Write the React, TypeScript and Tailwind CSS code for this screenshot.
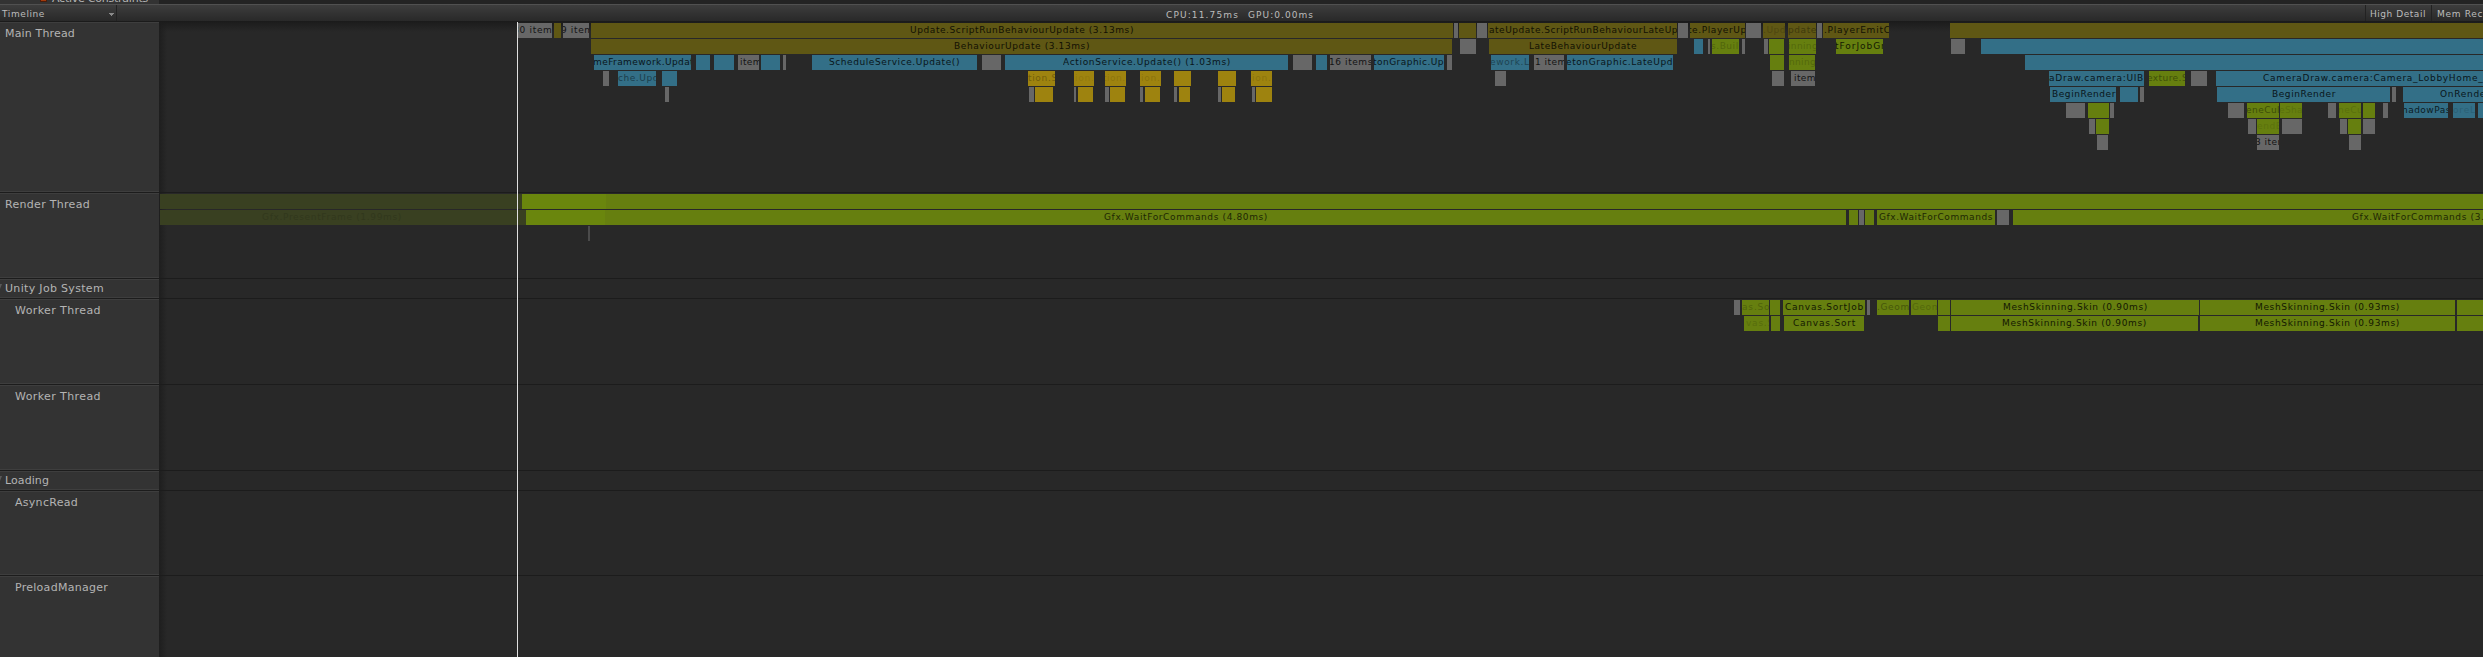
import React, { useLayoutEffect, useRef, useState } from 'react';

type Tone = 'o' | 'g' | 'b' | 'y' | 'x' | 'd' | 'l' | 'k';
const TONES: Record<Tone, string> = {
  o: 'bg-[#5f5714]',
  g: 'bg-[#667f0f]',
  l: 'bg-[#6a860d]',
  b: 'bg-[#336f87]',
  y: 'bg-[#9e830f]',
  x: 'bg-[#676767]',
  d: 'bg-[#394021]',
  k: 'bg-[#4b4b4b]',
};

// [start, end, tone, label, label start, label width, label opacity]
type Sample = [number, number, Tone, string?, number?, number?, number?];

function Fit({ text, width, className }: { text: string; width: number; className: string }) {
  const ref = useRef<HTMLSpanElement>(null);
  const [spacing, setSpacing] = useState(0);
  useLayoutEffect(() => {
    if (ref.current) {
      const natural = ref.current.getBoundingClientRect().width;
      setSpacing((width - natural) / text.length);
    }
  }, [text, width]);
  return (
    <span ref={ref} className={`block w-max whitespace-pre ${className}`} style={{ letterSpacing: spacing }}>
      {text}
    </span>
  );
}

function Bar({ s }: { s: Sample }) {
  const [a, b, tone, text, tx = 0, tw = 0, op = 0.8] = s;
  return (
    <div className={`absolute inset-y-0 overflow-hidden ${TONES[tone]}`} style={{ left: a - 159, width: b - a }}>
      {text && (
        <div className="absolute top-0 flex" style={{ left: tx - a, opacity: op }}>
          <Fit text={text} width={tw} className="text-[9px] leading-[14px] text-black" />
        </div>
      )}
    </div>
  );
}

function Track({ rows, height, group }: { rows: Sample[][]; height: number; group?: boolean }) {
  return (
    <div className="flex flex-col gap-px border-b border-[#1c1c1c] pt-px" style={{ height }}>
      {!group &&
        rows.map((row, i) => (
          <div key={i} className="relative h-[15px] shrink-0">
            {row.map((s, j) => (
              <Bar key={j} s={s} />
            ))}
          </div>
        ))}
    </div>
  );
}

const MAIN: Sample[][] = [
  [
    [518, 552, 'x', '80 items', 513, 45],
    [554, 561, 'o'],
    [563, 589, 'x', '9 items', 561, 38],
    [591, 1453, 'o', 'Update.ScriptRunBehaviourUpdate (3.13ms)', 910, 224],
    [1454, 1458, 'x'],
    [1459, 1476, 'o'],
    [1477, 1487, 'x'],
    [1488, 1677, 'o', 'ateUpdate.ScriptRunBehaviourLateUp', 1489, 189],
    [1678, 1688, 'x'],
    [1690, 1745, 'o', 'te.PlayerUpd', 1688, 65],
    [1746, 1761, 'x'],
    [1763, 1785, 'o', '.Upda', 1763, 29, 0.18],
    [1788, 1816, 'o', 'pdate', 1788, 29, 0.35],
    [1817, 1822, 'x'],
    [1823, 1889, 'o', '.PlayerEmitCa', 1824, 73],
    [1950, 2483, 'o'],
  ],
  [
    [591, 1452, 'o', 'BehaviourUpdate (3.13ms)', 954, 136],
    [1460, 1476, 'x'],
    [1489, 1677, 'o', 'LateBehaviourUpdate', 1529, 108],
    [1694, 1703, 'b'],
    [1708, 1710, 'x'],
    [1712, 1739, 'g', 's.Build', 1711, 34, 0.2],
    [1742, 1745, 'x'],
    [1764, 1768, 'x'],
    [1769, 1784, 'g'],
    [1789, 1816, 'g', 'inning', 1788, 30, 0.18],
    [1836, 1883, 'g', 'tForJobGro', 1835, 57],
    [1951, 1965, 'x'],
    [1981, 2483, 'b'],
  ],
  [
    [594, 691, 'b', 'meFramework.Update', 593, 107],
    [696, 710, 'b'],
    [714, 734, 'b'],
    [738, 759, 'x', 'items', 740, 27],
    [761, 780, 'b'],
    [783, 786, 'x'],
    [812, 977, 'b', 'ScheduleService.Update()', 829, 131],
    [982, 1001, 'x'],
    [1005, 1288, 'b', 'ActionService.Update() (1.03ms)', 1063, 168],
    [1293, 1312, 'x'],
    [1316, 1327, 'b'],
    [1330, 1371, 'x', '16 items', 1329, 44],
    [1374, 1444, 'b', 'tonGraphic.Up', 1373, 71],
    [1447, 1452, 'x'],
    [1491, 1529, 'b', 'ework.Lat', 1490, 50, 0.4],
    [1534, 1564, 'x', '1 items', 1535, 37],
    [1567, 1673, 'b', 'etonGraphic.LateUpd', 1566, 107],
    [1770, 1784, 'g'],
    [1789, 1815, 'g', 'nning', 1789, 27, 0.18],
    [2025, 2483, 'b'],
  ],
  [
    [603, 609, 'x'],
    [618, 656, 'b', 'che.Upda', 618, 47, 0.45],
    [662, 677, 'b'],
    [1028, 1055, 'y', 'tion.Se', 1028, 36, 0.28],
    [1074, 1094, 'y', 'ion.S', 1075, 26, 0.08],
    [1105, 1126, 'y', 'tion.S', 1103, 29, 0.1],
    [1140, 1161, 'y', 'ion.S', 1141, 26, 0.12],
    [1174, 1191, 'y'],
    [1218, 1236, 'y'],
    [1251, 1272, 'y', 'ion.S', 1252, 26, 0.12],
    [1495, 1506, 'x'],
    [1772, 1784, 'x'],
    [1791, 1815, 'x', 'items', 1794, 27],
    [2049, 2144, 'b', 'aDraw.camera:UIB', 2049, 95],
    [2149, 2185, 'g', 'exture.Se', 2147, 47, 0.38],
    [2191, 2207, 'x'],
    [2216, 2483, 'b', 'CameraDraw.camera:Camera_LobbyHome_Camera', 2263, 260],
  ],
  [
    [665, 669, 'x'],
    [1029, 1034, 'x'],
    [1035, 1053, 'y'],
    [1074, 1076, 'x'],
    [1078, 1093, 'y'],
    [1105, 1109, 'x'],
    [1110, 1125, 'y'],
    [1140, 1143, 'x'],
    [1145, 1160, 'y'],
    [1174, 1177, 'x'],
    [1179, 1190, 'y'],
    [1218, 1221, 'x'],
    [1222, 1235, 'y'],
    [1252, 1255, 'x'],
    [1256, 1272, 'y'],
    [2050, 2116, 'b', 'BeginRender', 2052, 64],
    [2120, 2138, 'b'],
    [2140, 2144, 'x'],
    [2217, 2390, 'b', 'BeginRender', 2272, 64],
    [2392, 2396, 'x'],
    [2403, 2483, 'b', 'OnRenderObject', 2440, 84],
  ],
  [
    [2066, 2085, 'x'],
    [2088, 2109, 'g'],
    [2110, 2114, 'x'],
    [2228, 2244, 'x'],
    [2247, 2279, 'g', 'eneCull', 2246, 37, 0.4],
    [2280, 2302, 'g', 'eShad', 2279, 30, 0.12],
    [2328, 2336, 'x'],
    [2339, 2361, 'g', 'neCul', 2338, 28, 0.12],
    [2363, 2375, 'g'],
    [2383, 2388, 'x'],
    [2404, 2448, 'b', 'hadowPass', 2402, 54, 0.75],
    [2453, 2475, 'b', 'oreLo', 2453, 29, 0.13],
    [2478, 2483, 'b'],
  ],
  [
    [2089, 2095, 'x'],
    [2096, 2109, 'g'],
    [2248, 2256, 'x'],
    [2257, 2279, 'g', 'endE', 2257, 25, 0.1],
    [2282, 2302, 'x'],
    [2340, 2347, 'x'],
    [2348, 2361, 'g'],
    [2363, 2375, 'x'],
  ],
  [
    [2097, 2108, 'x'],
    [2257, 2279, 'x', '3 items', 2255, 37],
    [2349, 2361, 'x'],
  ],
];

const RENDER: Sample[][] = [
  [
    [160, 522, 'd'],
    [522, 606, 'l'],
    [606, 2483, 'g'],
  ],
  [
    [160, 526, 'd', 'Gfx.PresentFrame (1.99ms)', 262, 140, 0.13],
    [526, 605, 'l'],
    [605, 1846, 'g', 'Gfx.WaitForCommands (4.80ms)', 1104, 164, 0.7],
    [1849, 1858, 'g'],
    [1859, 1864, 'x'],
    [1865, 1874, 'g'],
    [1877, 1995, 'g', 'Gfx.WaitForCommands', 1879, 114, 0.7],
    [1997, 2009, 'x'],
    [2013, 2483, 'g', 'Gfx.WaitForCommands (3.88ms)', 2352, 164, 0.7],
  ],
  [[588, 590, 'k']],
];

const WORKER: Sample[][] = [
  [
    [1734, 1740, 'x'],
    [1742, 1769, 'g', 'as.Sor', 1742, 33, 0.22],
    [1770, 1780, 'g'],
    [1783, 1865, 'g', 'Canvas.SortJob', 1785, 79],
    [1867, 1870, 'x'],
    [1877, 1909, 'g', '.Geome', 1877, 39, 0.32],
    [1911, 1937, 'g', 'Geom', 1912, 29, 0.18],
    [1938, 1950, 'g'],
    [1951, 2199, 'g', 'MeshSkinning.Skin (0.90ms)', 2003, 145],
    [2200, 2455, 'g', 'MeshSkinning.Skin (0.93ms)', 2255, 145],
    [2457, 2483, 'g'],
  ],
  [
    [1744, 1769, 'g', 'vas.S', 1746, 28, 0.15],
    [1771, 1780, 'g'],
    [1784, 1864, 'g', 'Canvas.Sort', 1793, 63],
    [1938, 1950, 'g'],
    [1951, 2198, 'g', 'MeshSkinning.Skin (0.90ms)', 2002, 145],
    [2200, 2455, 'g', 'MeshSkinning.Skin (0.93ms)', 2255, 145],
    [2457, 2483, 'g'],
  ],
];

type TrackInfo = { name: string; width: number; height: number; kind: 'top' | 'group' | 'child'; rows: Sample[][] };
const TRACKS: TrackInfo[] = [
  { name: 'Main Thread', width: 70, height: 171, kind: 'top', rows: MAIN },
  { name: 'Render Thread', width: 85, height: 86, kind: 'top', rows: RENDER },
  { name: 'Unity Job System', width: 99, height: 20, kind: 'group', rows: [] },
  { name: 'Worker Thread', width: 86, height: 86, kind: 'child', rows: WORKER },
  { name: 'Worker Thread', width: 86, height: 86, kind: 'child', rows: [] },
  { name: 'Loading', width: 44, height: 20, kind: 'group', rows: [] },
  { name: 'AsyncRead', width: 63, height: 85, kind: 'child', rows: [] },
  { name: 'PreloadManager', width: 93, height: 86, kind: 'child', rows: [] },
];

const LABEL_PAD = { top: 'pl-[5px] pt-[3px]', group: 'pl-[5px] pt-px', child: 'pl-[15px] pt-[3px]' };

function TrackLabel({ t }: { t: TrackInfo }) {
  return (
    <div className="border-b border-[#1c1c1c]" style={{ height: t.height }}>
      <div className={`relative h-full border-y border-[#3e3e3e] bg-[#333333] ${LABEL_PAD[t.kind]}`}>
        {t.kind === 'group' && (
          <svg className="absolute left-0 top-[4px]" width="3" height="5">
            <path d="M0 0H2L0 5Z" fill="#5a5a5a" />
          </svg>
        )}
        <Fit text={t.name} width={t.width} className="text-[11px] leading-[15px] text-[#b4b4b4]" />
      </div>
    </div>
  );
}

export default function App() {
  return (
    <div className="flex h-[657px] w-[2483px] flex-col overflow-hidden bg-[#282828] font-['DejaVu_Sans',sans-serif]">
      <div className="flex h-[4px] shrink-0 overflow-hidden bg-[#232323]">
        <div className="flex w-[159px] items-start overflow-hidden bg-[#333333] pl-[40px]">
          <div className="h-[2px] w-[7px] shrink-0 border-x border-b border-[#4a1d0b] bg-[#a33a0c]" />
          <div className="-mt-[7px] pl-[5px]">
            <Fit text="Active Constraints" width={96} className="text-[11px] leading-[12px] text-[#b4b4b4]" />
          </div>
        </div>
      </div>
      <div className="flex h-[18px] shrink-0 justify-between border-b border-t border-b-[#1b1b1b] border-t-[#505050] bg-linear-to-b from-[#3d3d3d] to-[#292929]">
        <div className="flex w-[117px] items-start justify-between border-r border-[#222222] pl-[2px] pr-[2px] pt-[2px]">
          <Fit text="Timeline" width={43} className="text-[9px] leading-[14px] text-[#bcbcbc]" />
          <svg className="mt-[6px]" width="5" height="3">
            <path d="M0 0H5V1H4V2H3V3H2V2H1V1H0Z" fill="#8a8a8a" />
          </svg>
        </div>
        <div className="flex flex-1 pl-[1049px] pt-[3px]">
          <Fit text="CPU:11.75ms" width={73} className="text-[9px] leading-[14px] text-[#bcbcbc]" />
          <span className="w-[9px]" />
          <Fit text="GPU:0.00ms" width={66} className="text-[9px] leading-[14px] text-[#bcbcbc]" />
        </div>
        <div className="flex w-[118px] overflow-hidden">
          <div className="flex w-[66px] shrink-0 border-l border-[#222222] pl-[4px] pt-[2px]">
            <Fit text="High Detail" width={56} className="text-[9px] leading-[14px] text-[#bcbcbc]" />
          </div>
          <div className="flex shrink-0 border-l border-[#222222] pl-[5px] pt-[2px]">
            <Fit text="Mem Record" width={63} className="text-[9px] leading-[14px] text-[#bcbcbc]" />
          </div>
        </div>
      </div>
      <div className="flex min-h-0 flex-1">
        <div className="w-[159px] shrink-0">
          {TRACKS.map((t, i) => (
            <TrackLabel key={i} t={t} />
          ))}
        </div>
        <div className="relative flex-1 overflow-hidden">
          <div className="absolute inset-y-0 left-0 w-[8px] bg-linear-to-r from-[#1e1e1e] to-transparent" />
          <div className="absolute inset-x-0 top-0 h-[10px] bg-linear-to-b from-[#1c1c1c] to-transparent" />
          <div className="relative">
            {TRACKS.map((t, i) => (
              <Track key={i} rows={t.rows} height={t.height} group={t.kind === 'group'} />
            ))}
          </div>
          <div className="absolute inset-y-0 left-[358px] w-px bg-[#e0e0e0]" />
        </div>
      </div>
    </div>
  );
}
